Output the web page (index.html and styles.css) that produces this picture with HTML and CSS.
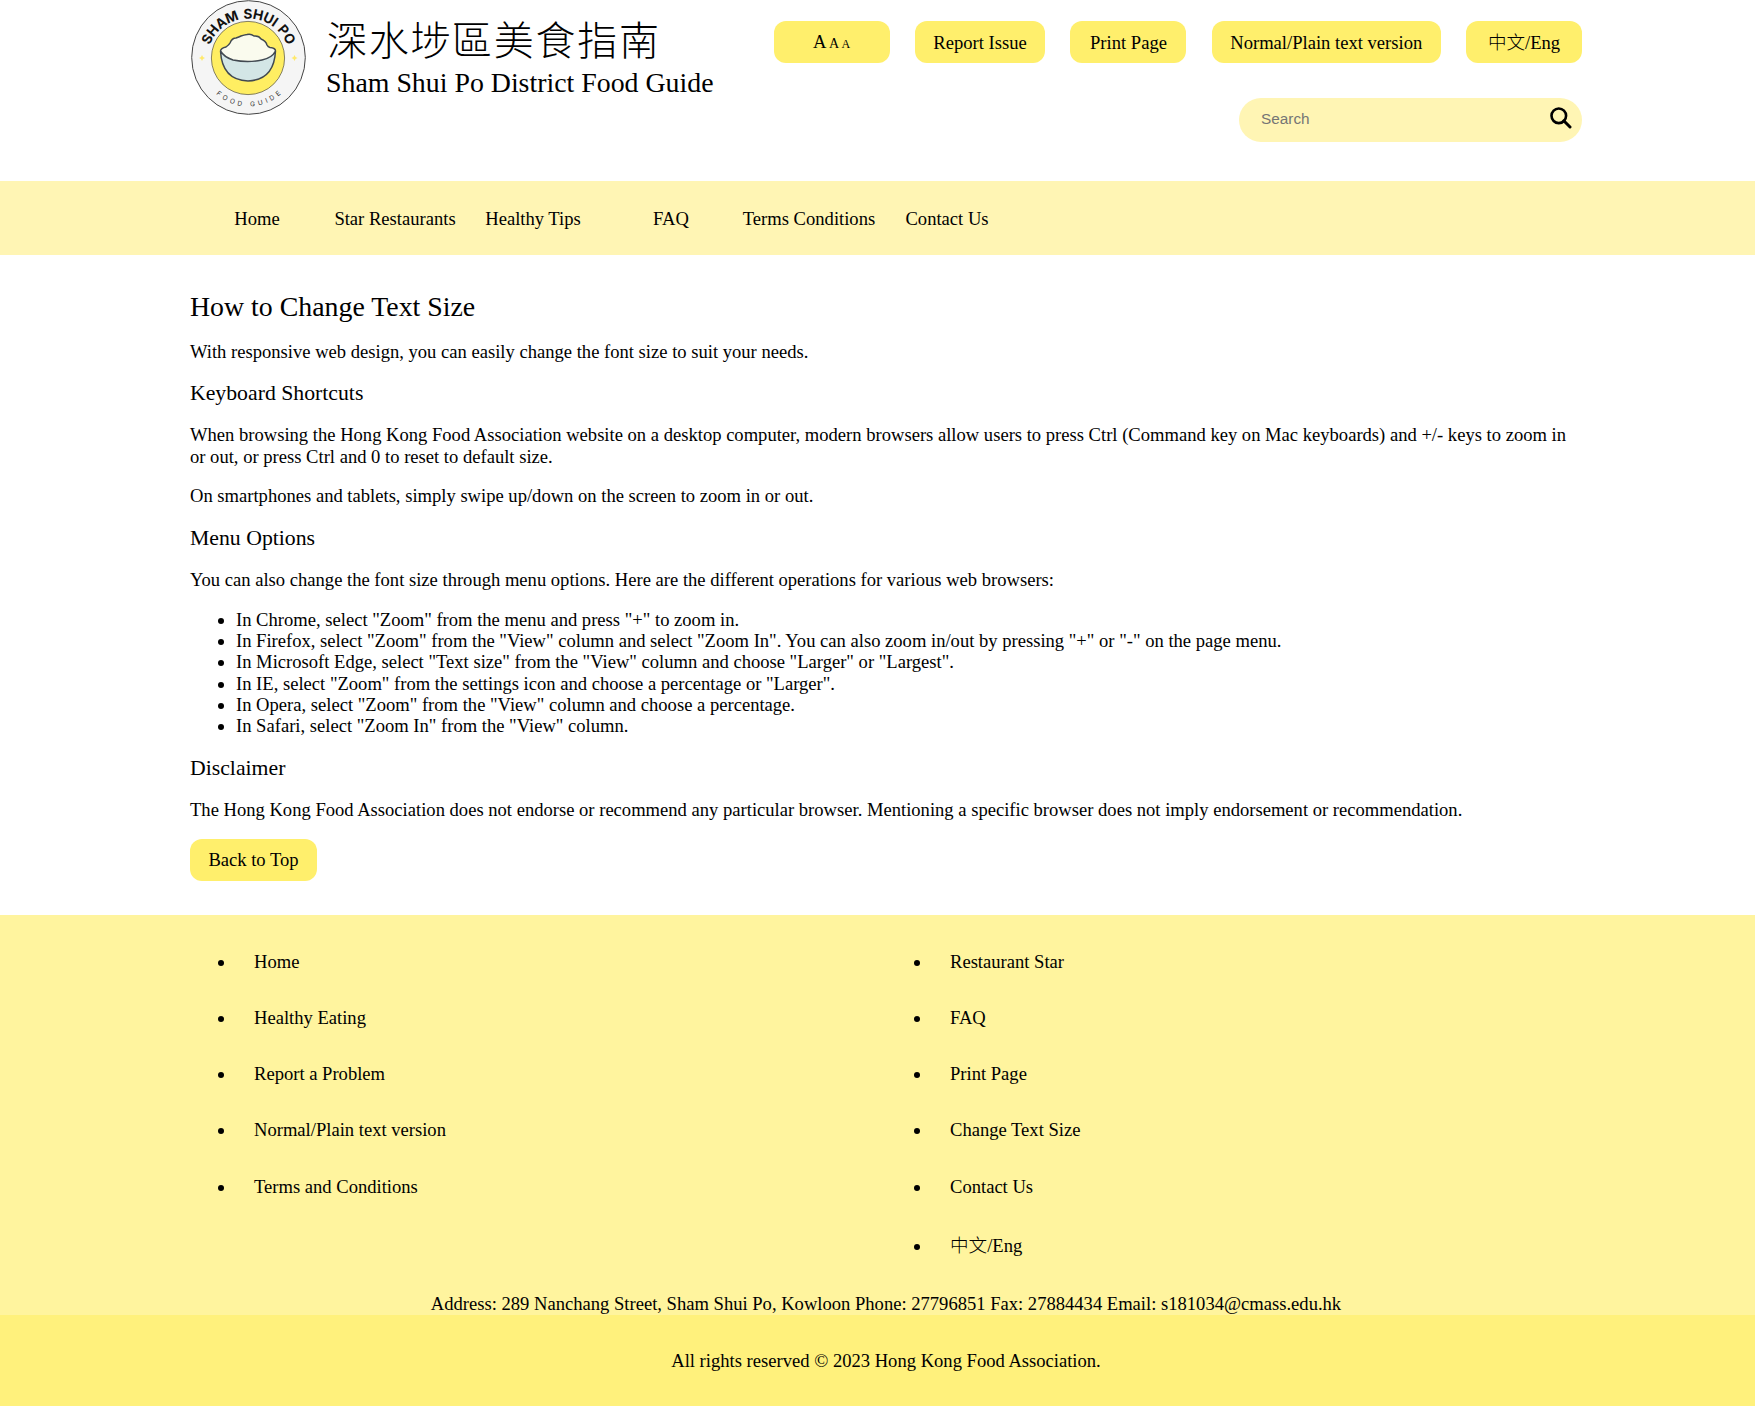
FILE: index.html
```html
<!DOCTYPE html>
<html lang="en">
<head>
<meta charset="utf-8">
<title>Sham Shui Po District Food Guide</title>
<link rel="stylesheet" href="styles.css">
</head>
<body>
<header class="header wrap">
  <a class="brand">
    <svg class="logo" viewBox="0 0 116 116" width="116" height="116">
      <defs>
        <path id="arc-top" d="M17 63 A41.500 41.500 0 1 1 99.800 63"/>
        <path id="arc-bottom" d="M10 58 A48.500 48.500 0 0 0 107 58"/>
      </defs>
      <circle cx="58.500" cy="57.500" r="56.800" fill="#f5f5f5" stroke="#444" stroke-width="1"/>
      <circle cx="58" cy="58" r="36.600" fill="#ffee62" stroke="#66624a" stroke-width=".8"/>
      <path d="M30.500 51 Q32 80 58 81 Q84 80 85.500 51 Z" fill="#d3e6e6"/>
      <path d="M30.500 51 Q31 48 36 47 Q39 45 40 43 Q42 38 46 38 Q49 37 51 36 Q54 35 57 34.500 Q61 33.500 64 36 Q69 35.500 71 39 Q76 41 77 45 Q78 47 80 47.500 Q85.500 48 85.500 51 Q82 58 72 60 Q58 63 43 60 Q33 57 30.500 51Z" fill="#fafbee"/>
      <path d="M30.500 51 Q32 80 58 81 Q84 80 85.500 51 Q85.500 48 80 47.500 Q78 47 77 45 Q76 41 71 39 Q69 35.500 64 36 Q61 33.500 57 34.500 Q54 35 51 36 Q49 37 46 38 Q42 38 40 43 Q39 45 36 47 Q31 48 30.500 51 Q34 57 43 60 Q58 63 72 60 Q82 58 85.500 51" fill="none" stroke="#414951" stroke-width="1.500" stroke-linejoin="round"/>
      <path d="M12 55 L13 57 L15 58 L13 59 L12 61 L11 59 L9 58 L11 57Z M104.500 55 L105.500 57 L107.500 58 L105.500 59 L104.500 61 L103.500 59 L101.500 58 L103.500 57Z" fill="#ffe96b"/>
      <text class="logo-name"><textPath href="#arc-top" startOffset="50%" text-anchor="middle">SHAM SHUI PO</textPath></text>
      <text class="logo-sub"><textPath href="#arc-bottom" startOffset="50%" text-anchor="middle" textLength="71">FOOD GUIDE</textPath></text>
    </svg>
    <div class="brand-text">
      <div class="brand-zh" lang="zh-Hant">深水埗區美食指南</div>
      <div class="brand-en">Sham Shui Po District Food Guide</div>
    </div>
  </a>
  <div class="tools">
    <div class="buttons">
      <a class="btn sizes"><span>A<span class="a-mid"> A</span><span class="a-small"> A</span></span></a>
      <a class="btn">Report Issue</a>
      <a class="btn">Print Page</a>
      <a class="btn">Normal/Plain text version</a>
      <a class="btn"><span>中文/Eng</span></a>
    </div>
    <form class="search">
      <input type="text" placeholder="Search">
      <svg viewBox="0 0 22 22" width="22" height="22"><circle cx="8.800" cy="8.800" r="7.300" fill="none" stroke="#000" stroke-width="2.600"/><path d="M13.800 13.800 L20 20" stroke="#000" stroke-width="3" stroke-linecap="round"/></svg>
    </form>
  </div>
</header>
<nav class="nav">
  <a>Home</a><a>Star Restaurants</a><a>Healthy Tips</a><a>FAQ</a><a>Terms Conditions</a><a>Contact Us</a>
</nav>
<main class="main wrap">
  <h1>How to Change Text Size</h1>
  <p>With responsive web design, you can easily change the font size to suit your needs.</p>
  <h2>Keyboard Shortcuts</h2>
  <p>When browsing the Hong Kong Food Association website on a desktop computer, modern browsers allow users to press Ctrl (Command key on Mac keyboards) and +/- keys to zoom in or out, or press Ctrl and 0 to reset to default size.</p>
  <p>On smartphones and tablets, simply swipe up/down on the screen to zoom in or out.</p>
  <h2>Menu Options</h2>
  <p>You can also change the font size through menu options. Here are the different operations for various web browsers:</p>
  <ul>
    <li>In Chrome, select "Zoom" from the menu and press "+" to zoom in.</li>
    <li>In Firefox, select "Zoom" from the "View" column and select "Zoom In". You can also zoom in/out by pressing "+" or "-" on the page menu.</li>
    <li>In Microsoft Edge, select "Text size" from the "View" column and choose "Larger" or "Largest".</li>
    <li>In IE, select "Zoom" from the settings icon and choose a percentage or "Larger".</li>
    <li>In Opera, select "Zoom" from the "View" column and choose a percentage.</li>
    <li>In Safari, select "Zoom In" from the "View" column.</li>
  </ul>
  <h2>Disclaimer</h2>
  <p>The Hong Kong Food Association does not endorse or recommend any particular browser. Mentioning a specific browser does not imply endorsement or recommendation.</p>
  <a class="btn back">Back to Top</a>
</main>
<footer>
  <div class="footer-main">
    <div class="footer-cols wrap">
      <ul>
        <li>Home</li>
        <li>Healthy Eating</li>
        <li>Report a Problem</li>
        <li>Normal/Plain text version</li>
        <li>Terms and Conditions</li>
      </ul>
      <ul>
        <li>Restaurant Star</li>
        <li>FAQ</li>
        <li>Print Page</li>
        <li>Change Text Size</li>
        <li>Contact Us</li>
        <li class="lang">中文/Eng</li>
      </ul>
    </div>
    <div class="address wrap">Address: 289 Nanchang Street, Sham Shui Po, Kowloon Phone: 27796851 Fax: 27884434 Email: s181034@cmass.edu.hk</div>
  </div>
  <div class="copyright"><div class="wrap">All rights reserved © 2023 Hong Kong Food Association.</div></div>
</footer>
</body>
</html>
```
FILE: styles.css
```css
* { box-sizing: border-box; }
body {
  margin: 0;
  background: #fff;
  color: #000;
  font: 300 18.58px/21.36px "Liberation Serif", "Noto Sans CJK TC", serif;
}
.wrap { width: 1392px; margin-left: 190px; }

.header { display: flex; justify-content: space-between; height: 181px; }
.brand { display: flex; }
.logo { display: block; flex: none; }
.logo-name {
  font: 700 13.6px "Inter", sans-serif;
  letter-spacing: -.25px;
  word-spacing: 1.3px;
  fill: #111;
}
.logo-sub { font: 400 6.6px "Inter", sans-serif; fill: #333; }
.brand-text { padding: 13px 0 0 20px; }
.brand-zh {
  padding-left: 1px;
  font: 300 40px/50px "Noto Sans CJK TC", sans-serif;
  letter-spacing: 1.7px;
  white-space: nowrap;
}
.brand-en { margin-top: 4px; font-size: 27.85px; line-height: 32px; white-space: nowrap; }

.tools { display: flex; flex-direction: column; align-items: flex-end; padding-top: 21px; }
.buttons { display: flex; gap: 25.4px; }
.btn {
  display: flex;
  align-items: center;
  justify-content: center;
  min-width: 116px;
  height: 42px;
  padding: 2px 18.4px 0;
  border-radius: 12px;
  background: #ffef6c;
  white-space: nowrap;
}
.sizes { padding-top: 3px; }
.a-mid { font-size: 14px; }
.a-small { font-size: 12px; }
.search {
  display: flex;
  align-items: center;
  width: 343px;
  height: 44px;
  margin-top: 34.5px;
  padding: 0 10px 1px 22px;
  border-radius: 23px;
  background: #fff5b4;
}
.search input {
  flex: 1;
  min-width: 0;
  padding: 0;
  border: 0;
  background: none;
  font: 15.33px "Liberation Sans", sans-serif;
}
.search input::placeholder { color: #757575; }
.search svg { margin-bottom: 3px; }

.nav { display: flex; height: 74px; padding: 0 0 0 188px; align-items: center; background: #fff5b4; }
.nav a { width: 138px; text-align: center; white-space: nowrap; padding-top: 2px; }

.main { height: 660px; padding-top: 36px; }
h1 { margin: 0; font-size: 27.85px; line-height: 32px; font-weight: 400; }
h1 + p { margin-top: 17.6px; }
h2 { margin: 19.2px 0 19px; font-size: 21.76px; line-height: 24px; font-weight: 400; }
p { margin: 18.4px 0; }
.main ul { margin: 18.4px 0; padding-left: 46px; }
.back { width: 127px; margin-top: 17.6px; padding-top: 0; }

.footer-main { height: 399.5px; padding-top: 18.4px; background: #fff49e; }
.footer-cols { display: grid; grid-template-columns: 1fr 1fr; height: 360px; }
.footer-cols ul { margin: 0; padding: 0 0 0 46px; }
.footer-cols li { padding: 18.4px 18px; line-height: 19.4px; }
.footer-cols .lang { padding-top: 22px; }
.address { text-align: center; }
.copyright { height: 91.5px; padding-top: 35px; text-align: center; background: #fff17c; }
```
